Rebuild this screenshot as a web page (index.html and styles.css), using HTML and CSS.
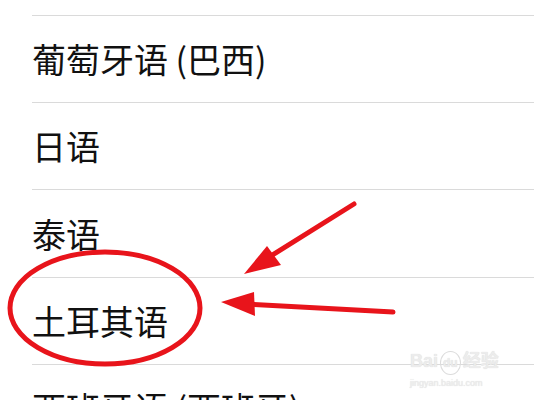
FILE: index.html
```html
<!DOCTYPE html>
<html lang="zh-CN">
<head>
    <meta charset="utf-8">
    <title>语言</title>
    <link rel="stylesheet" href="styles.css">
</head>
<body>
<div class="screen">
    <ul class="lang-list">
        <li class="lang-item">葡萄牙语 (巴西)</li>
        <li class="lang-item">日语</li>
        <li class="lang-item tall">泰语</li>
        <li class="lang-item">土耳其语</li>
        <li class="lang-item">西班牙语 (西班牙)</li>
    </ul>

    <!-- 红色标注 -->
    <svg class="marks" width="534" height="400" viewBox="0 0 534 400">
        <ellipse cx="105" cy="308" rx="95" ry="56" fill="none" stroke="#e8141b" stroke-width="5"/>
        <line x1="354" y1="204" x2="266" y2="259" stroke="#e8141b" stroke-width="5" stroke-linecap="round"/>
        <polygon points="244,274 267,246 281,265" fill="#e8141b"/>
        <line x1="393" y1="312" x2="245" y2="304" stroke="#e8141b" stroke-width="5" stroke-linecap="round"/>
        <polygon points="221,302 254,292 255,316" fill="#e8141b"/>
    </svg>

    <div class="watermark">
        <div class="wm-top">Bai<span class="wm-du">du</span>经验</div>
        <div class="wm-url">jingyan.baidu.com</div>
    </div>
</div>
</body>
</html>
```

FILE: styles.css
```css
body {
    margin: 0;
    background: #fff;
    font-family: "Noto Sans CJK SC", "Noto Sans", sans-serif;
    color: #111;
    overflow: hidden;
}

.screen {
    position: relative;
    width: 534px;
    height: 400px;
    overflow: hidden;
}

.lang-list {
    list-style: none;
    margin: 0;
    padding: 15px 0 0 32px;
}

.lang-item {
    height: 86px;
    border-bottom: 1px solid #dadada;
    display: flex;
    align-items: center;
    font-size: 34px;
    line-height: 1;
}

.lang-item:first-child {
    border-top: 1px solid #dadada;
}

.lang-item.tall {
    height: 87px;
}

.marks {
    position: absolute;
    top: 0;
    left: 0;
}

.watermark {
    position: absolute;
    left: 410px;
    top: 350px;
    color: #ececec;
    font-family: "Liberation Sans", "Noto Sans CJK SC", sans-serif;
    text-shadow: 0 0 1px #d6d6d6;
}

.wm-top {
    font-size: 18px;
    font-weight: bold;
    line-height: 22px;
}

.wm-du {
    display: inline-block;
    font-size: 12px;
    border: 1px solid #dcdcdc;
    border-radius: 50%;
    padding: 0 2px;
    margin: 0 2px;
}

.wm-url {
    font-size: 9px;
    line-height: 12px;
    margin-top: 2px;
}
```
